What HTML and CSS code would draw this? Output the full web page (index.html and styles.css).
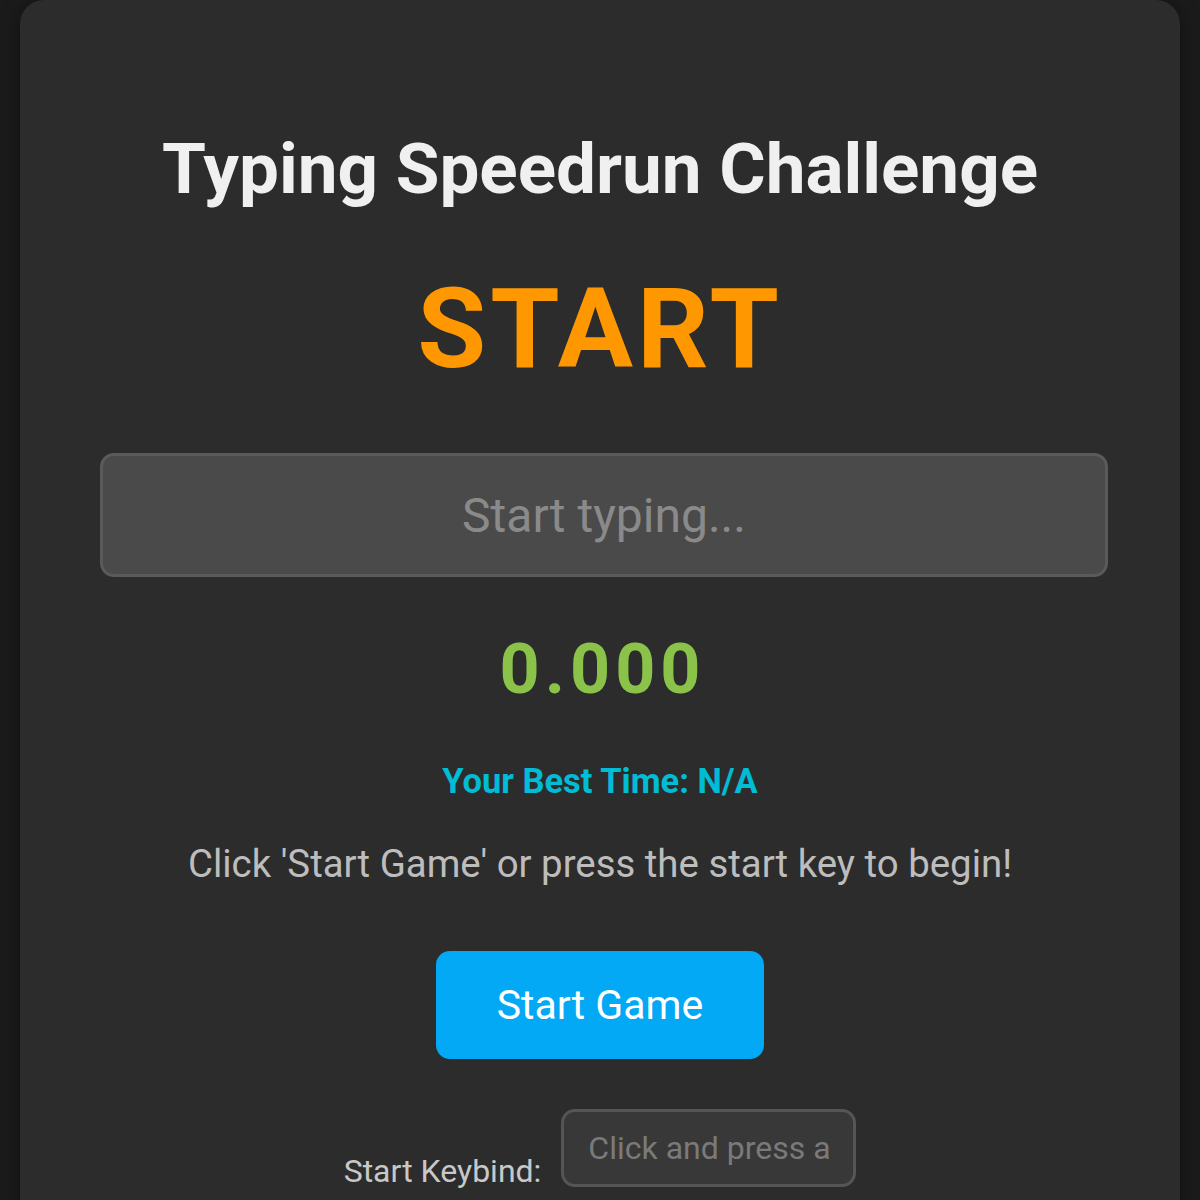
FILE: index.html
```html
<!DOCTYPE html>
<html lang="en">
<head>
<meta charset="utf-8">
<title>Typing Speedrun Challenge</title>
<link rel="stylesheet" href="styles.css">
</head>
<body>
<main class="card">
  <h1 class="title">Typing Speedrun Challenge</h1>
  <div class="word">START</div>
  <input class="typing" type="text" placeholder="Start typing...">
  <div class="timer">0.000</div>
  <div class="best">Your Best Time: N/A</div>
  <p class="hint">Click 'Start Game' or press the start key to begin!</p>
  <button class="start-btn">Start Game</button>
  <div class="keybind">
    <label class="keybind-label">Start Keybind:</label>
    <input class="keybind-input" type="text" placeholder="Click and press a key">
  </div>
</main>
</body>
</html>
```

FILE: styles.css
```css
html, body {
  margin: 0;
  padding: 0;
  background: #1b1b1b;
  height: 100%;
  overflow: hidden;
}
body {
  font-family: Roboto, "Noto Sans", sans-serif;
  display: flex;
  justify-content: center;
  padding: 0 20px;
}
.card {
  width: 100%;
  background: #2c2c2c;
  border-radius: 24px;
  box-shadow: 0 0 20px rgba(0,0,0,0.4);
  display: flex;
  flex-direction: column;
  align-items: center;
  padding: 129px 80px 0;
  box-sizing: border-box;
  min-height: 1300px;
}
.title {
  margin: 0;
  font-size: 71px;
  font-weight: 700;
  color: #f0f0f0;
  line-height: 80px;
}
.word {
  margin-top: 60px;
  font-size: 112px;
  font-weight: 700;
  color: #ff9800;
  letter-spacing: 4px;
  line-height: 120px;
}
.typing {
  margin-top: 64px;
  align-self: flex-start;
  width: calc(100% + 8px);
  height: 124px;
  box-sizing: border-box;
  background: #4a4a4a;
  border: 3px solid #5a5a5a;
  border-radius: 14px;
  font-family: Roboto, sans-serif;
  font-size: 48px;
  text-align: center;
  color: #eee;
  outline: none;
}
.typing::placeholder { color: #8a8a8a; }
.timer {
  margin-top: 47px;
  font-size: 70px;
  font-weight: 700;
  color: #8bc34a;
  letter-spacing: 5px;
  padding-left: 5px;
  line-height: 90px;
}
.best {
  margin-top: 47px;
  font-size: 34.5px;
  font-weight: 700;
  color: #00bcd4;
  line-height: 40px;
}
.hint {
  margin: 38px 0 0;
  font-size: 38.4px;
  color: #bdbdbd;
  line-height: 50px;
}
.start-btn {
  margin-top: 62px;
  width: 328px;
  height: 108px;
  background: #03a9f4;
  color: #fff;
  border: none;
  border-radius: 14px;
  font-family: Roboto, sans-serif;
  font-size: 41px;
}
.keybind {
  margin-top: 50px;
  display: flex;
  align-items: flex-end;
  gap: 20px;
}
.keybind-label {
  font-size: 32px;
  color: #c8c8c8;
  line-height: 40px;
  margin-bottom: -4px;
}
.keybind-input {
  width: 295px;
  height: 78px;
  box-sizing: border-box;
  background: #383838;
  border: 3px solid #555;
  border-radius: 14px;
  font-family: Roboto, sans-serif;
  font-size: 32px;
  color: #ddd;
  padding: 0 24px;
  outline: none;
}
.keybind-input::placeholder { color: #7a7a7a; }
```
